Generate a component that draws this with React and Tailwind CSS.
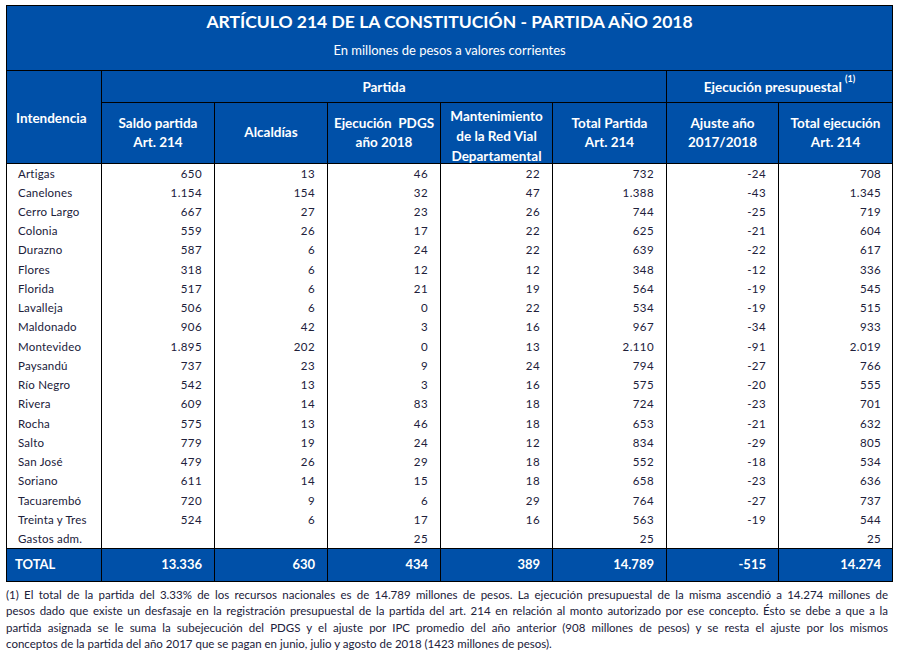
const rows = [
  ['Artigas', '650', '13', '46', '22', '732', '-24', '708'],
  ['Canelones', '1.154', '154', '32', '47', '1.388', '-43', '1.345'],
  ['Cerro Largo', '667', '27', '23', '26', '744', '-25', '719'],
  ['Colonia', '559', '26', '17', '22', '625', '-21', '604'],
  ['Durazno', '587', '6', '24', '22', '639', '-22', '617'],
  ['Flores', '318', '6', '12', '12', '348', '-12', '336'],
  ['Florida', '517', '6', '21', '19', '564', '-19', '545'],
  ['Lavalleja', '506', '6', '0', '22', '534', '-19', '515'],
  ['Maldonado', '906', '42', '3', '16', '967', '-34', '933'],
  ['Montevideo', '1.895', '202', '0', '13', '2.110', '-91', '2.019'],
  ['Paysandú', '737', '23', '9', '24', '794', '-27', '766'],
  ['Río Negro', '542', '13', '3', '16', '575', '-20', '555'],
  ['Rivera', '609', '14', '83', '18', '724', '-23', '701'],
  ['Rocha', '575', '13', '46', '18', '653', '-21', '632'],
  ['Salto', '779', '19', '24', '12', '834', '-29', '805'],
  ['San José', '479', '26', '29', '18', '552', '-18', '534'],
  ['Soriano', '611', '14', '15', '18', '658', '-23', '636'],
  ['Tacuarembó', '720', '9', '6', '29', '764', '-27', '737'],
  ['Treinta y Tres', '524', '6', '17', '16', '563', '-19', '544'],
  ['Gastos adm.', '', '', '25', '', '25', '', '25'],
];

const totals = ['TOTAL', '13.336', '630', '434', '389', '14.789', '-515', '14.274'];

const widths = [95, 113, 113, 113, 112, 114, 112, 114];

const footnote = [
  '(1) El total de la partida del 3.33% de los recursos nacionales es de 14.789 millones de pesos. La ejecución presupuestal de la misma ascendió a  14.274 millones de',
  'pesos dado que existe un desfasaje en la registración presupuestal de la partida del art. 214 en relación al monto autorizado por ese concepto. Ésto se debe a que a la',
  'partida asignada se le suma  la subejecución del PDGS y el ajuste por IPC promedio del año anterior (908 millones de pesos) y se resta el ajuste por los mismos',
];

export default function App() {
  return (
    <div className="w-[901px] h-[654px] bg-white pl-[6px] pt-[5px] font-['Lato','Open_Sans',sans-serif] text-[#20203a]">
      <table className="table-fixed border-collapse w-[886px] border border-black">
        <colgroup>
          {widths.map((w, i) => (
            <col key={i} style={{ width: w }} />
          ))}
        </colgroup>
        <thead>
          {/* Title band */}
          <tr className="bg-[#0050a8] text-white h-[65px]">
            <th colSpan={8} className="border-b border-black p-0 pt-[7px] align-top font-normal">
              <div className="text-[17.5px] font-bold leading-none">
                ARTÍCULO 214 DE LA CONSTITUCIÓN - PARTIDA AÑO 2018
              </div>
              <div className="text-[13px] leading-none mt-[13px]">En millones de pesos a valores corrientes</div>
            </th>
          </tr>
          <tr className="bg-[#0050a8] text-white text-[13.5px] font-bold h-[32px]">
            <th rowSpan={2} className="border-r border-b border-black text-left pl-[9px] pt-[2px]">
              Intendencia
            </th>
            <th colSpan={5} className="border-r border-b border-black pt-[2px]">
              Partida
            </th>
            <th colSpan={2} className="border-b border-black pt-[2px]">
              Ejecución presupuestal <sup className="text-[9px] align-[6px]">(1)</sup>
            </th>
          </tr>
          <tr className="bg-[#0050a8] text-white text-[13.5px] font-bold h-[61px] leading-[19.5px]">
            <th className="border-r border-b border-black">
              Saldo partida
              <br />
              Art. 214
            </th>
            <th className="border-r border-b border-black">Alcaldías</th>
            <th className="border-r border-b border-black">
              Ejecución&nbsp; PDGS
              <br />
              año 2018
            </th>
            <th className="border-r border-b border-black align-top pt-[3px] overflow-hidden">
              <div className="h-[57px] leading-[20px] overflow-hidden">
                Mantenimiento
                <br />
                de la Red Vial
                <br />
                Departamental
              </div>
            </th>
            <th className="border-r border-b border-black">
              Total Partida
              <br />
              Art. 214
            </th>
            <th className="border-r border-b border-black">
              Ajuste año
              <br />
              2017/2018
            </th>
            <th className="border-b border-black">
              Total ejecución
              <br />
              Art. 214
            </th>
          </tr>
        </thead>
        <tbody className="text-[11.5px]">
          {rows.map((r, i) => (
            <tr key={i} className="h-[19.25px]">
              {r.map((c, j) => (
                <td
                  key={j}
                  className={
                    j === 0
                      ? 'border-r border-black pl-[11px] leading-none tracking-[0.2px]'
                      : j === 7
                        ? 'text-right pr-[11px] leading-none tracking-[0.4px]'
                        : 'border-r border-black text-right pr-[12px] leading-none tracking-[0.4px]'
                  }
                >
                  {c}
                </td>
              ))}
            </tr>
          ))}
          <tr className="bg-[#0050a8] text-white font-bold text-[13px] h-[33px] border-t border-black">
            {totals.map((c, j) => (
              <td
                key={j}
                className={
                  j === 0
                    ? 'border-r border-black pl-[8px]'
                    : j === 7
                      ? 'text-right pr-[11px]'
                      : 'border-r border-black text-right pr-[12px]'
                }
              >
                {c}
              </td>
            ))}
          </tr>
        </tbody>
      </table>

      {/* Footnote */}
      <div className="w-[882px] mt-[5px] text-[11.5px] leading-[16.3px] text-[#20203a]">
        {footnote.map((l, i) => (
          <div key={i} className="whitespace-nowrap text-justify [text-align-last:justify]">
            {l}
          </div>
        ))}
        <div className="whitespace-nowrap">
          conceptos de la partida del año 2017 que se pagan en junio, julio y agosto de 2018 (1423 millones de pesos).
        </div>
      </div>
    </div>
  );
}
